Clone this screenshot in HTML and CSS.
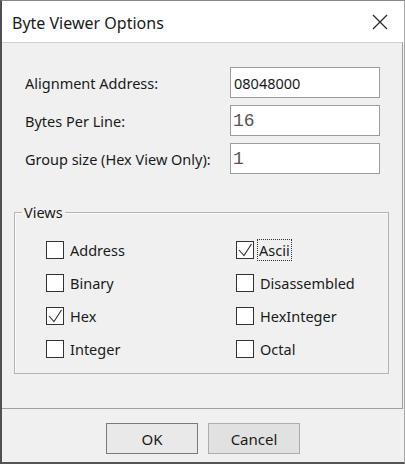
FILE: index.html
```html
<!DOCTYPE html>
<html>
<head>
<meta charset="utf-8">
<link rel="stylesheet" href="styles.css">
</head>
<body>
<div class="window">
  <div class="titlebar">
    <span class="title">Byte Viewer Options</span>
    <svg class="close" width="16" height="16" viewBox="0 0 16 16"><path d="M1 1 L15 15 M15 1 L1 15" stroke="#2b2b2b" stroke-width="1.3" fill="none"/></svg>
  </div>
  <div class="content">
    <div class="panel">
      <div class="form">
        <label class="lbl">Alignment Address:</label>
        <div class="field sans">08048000</div>
        <label class="lbl">Bytes Per Line:</label>
        <div class="field mono">16</div>
        <label class="lbl">Group size (Hex View Only):</label>
        <div class="field mono">1</div>
      </div>
      <fieldset class="group">
        <legend class="legend">Views</legend>
        <div class="checks">
          <div class="check"><span class="box"></span><span class="ctext">Address</span></div>
          <div class="check"><span class="box"><svg width="18" height="18" viewBox="0 0 18 18"><polyline points="3,9 8,14.5 15.5,3" fill="none" stroke="#333" stroke-width="1.1"/></svg></span><span class="ctext focus">Ascii</span></div>
          <div class="check"><span class="box"></span><span class="ctext">Binary</span></div>
          <div class="check"><span class="box"></span><span class="ctext">Disassembled</span></div>
          <div class="check"><span class="box"><svg width="18" height="18" viewBox="0 0 18 18"><polyline points="3,9 8,14.5 15.5,3" fill="none" stroke="#333" stroke-width="1.1"/></svg></span><span class="ctext">Hex</span></div>
          <div class="check"><span class="box"></span><span class="ctext">HexInteger</span></div>
          <div class="check"><span class="box"></span><span class="ctext">Integer</span></div>
          <div class="check"><span class="box"></span><span class="ctext">Octal</span></div>
        </div>
      </fieldset>
    </div>
    <div class="buttons">
      <button class="btn btn-default">OK</button>
      <button class="btn">Cancel</button>
    </div>
  </div>
</div>
</body>
</html>
```
FILE: styles.css
```css
html, body {
  margin: 0;
  padding: 0;
  background: #f0f0f0;
}
body {
  font-family: "Noto Sans", "Open Sans", sans-serif;
  color: #1a1a1a;
}
.window {
  width: 405px;
  height: 464px;
  box-sizing: border-box;
  border-left: 2px solid #505050;
  border-top: 1px solid #8a8a8a;
  border-right: 1px solid #a8a8a8;
  border-bottom: 2px solid #555;
  display: flex;
  flex-direction: column;
  background: #f0f0f0;
}
.titlebar {
  height: 41px;
  background: #fff;
  display: flex;
  align-items: center;
  justify-content: space-between;
  padding: 0 16px 0 10px;
  flex: none;
}
.title {
  font-size: 16px;
  color: #1a1a1a;
  position: relative;
  top: 1px;
}
.close {
  display: block;
}
.content {
  flex: 1;
  display: flex;
  flex-direction: column;
}
.panel {
  border-top: 1px solid #cfcfcf;
  border-right: 1px solid #a0a0a0;
  border-bottom: 1px solid #a0a0a0;
  margin-right: 1px;
  height: 367px;
  box-sizing: border-box;
  padding-top: 24px;
  display: flex;
  flex-direction: column;
}
.form {
  display: grid;
  grid-template-columns: 205px 150px;
  grid-auto-rows: 31px;
  row-gap: 7px;
  padding-left: 23px;
  align-items: center;
}
.lbl {
  font-size: 14.5px;
}
.field {
  height: 31px;
  box-sizing: border-box;
  border: 1px solid #9c9c9c;
  background: #fff;
  display: flex;
  align-items: center;
  padding-left: 3px;
}
.sans {
  font-size: 14.5px;
  color: #1a1a1a;
}
.mono {
  font-family: "Liberation Mono", "DejaVu Sans Mono", monospace;
  font-size: 18px;
  color: #555;
  padding-left: 2px;
}
.group {
  margin: 29px 13px 0 12px;
  padding: 0 0 15px 0;
  border: 1px solid #b4b4b4;
  box-shadow: inset 1px 1px 0 #fafafa;
}
.legend {
  font-size: 14.5px;
  padding: 0 2px;
  margin-left: 7px;
  line-height: 18px;
}
.checks {
  display: grid;
  grid-template-columns: 190px 1fr;
  grid-auto-rows: 18px;
  row-gap: 15px;
  margin-top: 20px;
  padding-left: 31px;
}
.check {
  display: flex;
  align-items: center;
  gap: 6px;
}
.box {
  width: 18px;
  height: 18px;
  box-sizing: border-box;
  border: 1px solid #333;
  background: #fff;
  display: block;
  position: relative;
}
.box svg {
  position: absolute;
  left: -1px;
  top: -1px;
}
.ctext {
  font-size: 14.5px;
  line-height: 20px;
}
.focus {
  outline: 1px dotted #333;
  outline-offset: 0;
  padding: 0 1px;
  margin-left: -2px;
}
.buttons {
  flex: 1;
  display: flex;
  justify-content: center;
  align-items: flex-start;
  gap: 10px;
  padding-top: 14px;
}
.btn {
  width: 92px;
  height: 31px;
  font-family: "Noto Sans", "Open Sans", sans-serif;
  font-size: 15px;
  color: #1a1a1a;
  background: #e1e1e1;
  border: 1px solid #adadad;
  padding: 0;
}
.btn-default {
  background: #e9e9e9;
  border: 1px solid #7a7a7a;
}
```
